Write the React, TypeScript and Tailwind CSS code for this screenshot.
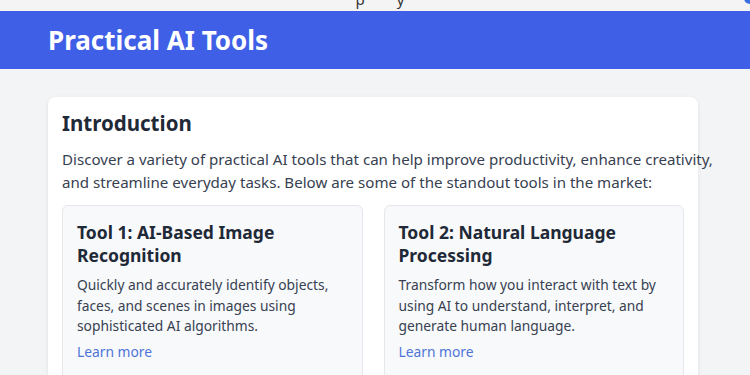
import React from 'react';

const tools = [
  {
    title: 'Tool 1: AI-Based Image Recognition',
    desc: 'Quickly and accurately identify objects, faces, and scenes in images using sophisticated AI algorithms.',
  },
  {
    title: 'Tool 2: Natural Language Processing',
    desc: 'Transform how you interact with text by using AI to understand, interpret, and generate human language.',
  },
];

export default function App() {
  return (
    <div className="min-h-[375px] bg-[#f3f4f6] font-['Noto_Sans',sans-serif] text-[#1f2937]">
      {/* top strip, cut off by the header */}
      <div className="relative h-[11px] overflow-hidden bg-[#f4f4f5]">
        <div className="absolute left-0 right-0 top-[-12px] text-center text-[15px] text-[#333]">
          <span className="pl-[10px]">p</span>
          <span className="pl-[32px]">y</span>
        </div>
        <div className="absolute right-[-6px] top-[-8px] h-[12px] w-[12px] rounded-full bg-[#3a6fe0]" />
      </div>

      <header className="flex h-[58px] items-center bg-[#3f5fe7] px-12">
        <h1 className="text-[26px] font-bold leading-none text-white">Practical AI Tools</h1>
      </header>

      <main className="pt-[28px]">
        <section className="ml-12 w-[650px] rounded-lg bg-white px-[14px] pt-[12px] pb-4 shadow-[0_1px_4px_rgba(0,0,0,0.08)]">
          <h2 className="text-[20.5px] font-bold leading-[28px]">Introduction</h2>
          <p className="mt-[11px] w-[664px] text-[15.1px] leading-[23px] text-[#374151]">
            Discover a variety of practical AI tools that can help improve productivity, enhance creativity,
            and streamline everyday tasks. Below are some of the standout tools in the market:
          </p>
          <div className="mt-[11px] grid grid-cols-2 gap-[21px]">
            {tools.map((t) => (
              <div key={t.title} className="rounded-md border border-[#e5e7eb] bg-[#f8f9fb] px-[14px] pt-[15px] pb-4">
                <h3 className="text-[17.5px] font-bold leading-[23px]">{t.title}</h3>
                <p className="mt-[8px] text-[13.8px] leading-[20.5px] text-[#374151]">{t.desc}</p>
                <a href="#" className="mt-[5px] block text-[13.8px] leading-[20px] text-[#4f74d8]">
                  Learn more
                </a>
              </div>
            ))}
          </div>
        </section>
      </main>
    </div>
  );
}
